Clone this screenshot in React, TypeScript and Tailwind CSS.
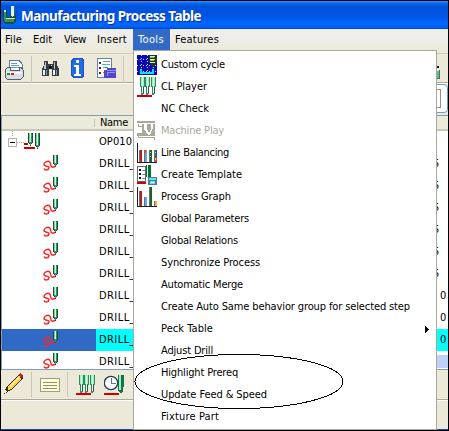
import React, { useLayoutEffect, useRef, useState } from "react";

/** Text set to a fixed advance width by spreading the difference over its letters. */
function Fit({ w, children, className = "" }: { w: number; children: string; className?: string }) {
  const ref = useRef<HTMLSpanElement>(null);
  const [spacing, setSpacing] = useState(0);
  useLayoutEffect(() => {
    const el = ref.current;
    if (!el) return;
    el.style.letterSpacing = "0px";
    const natural = el.getBoundingClientRect().width;
    const next = (w - natural) / children.length;
    el.style.letterSpacing = next + "px";
    setSpacing(next);
  }, [w, children]);
  return (
    <span ref={ref} className={"inline-block whitespace-pre " + className} style={{ letterSpacing: spacing }}>
      {children}
    </span>
  );
}

function Bit({ x, y, h = 12, w = 5 }: { x: number; y: number; h?: number; w?: number }) {
  const b = h - 4;
  return (
    <g transform={`translate(${x} ${y})`}>
      <path d={`M0 0h${w}v${b}l-${w / 2} 4l-${w / 2} -4z`} fill="#174d35" />
      <path d={`M1 0h1v${b}h-1z`} fill="#70d890" />
      <path d={`M2 0h1v${b}h-1z`} fill="#d4ffe0" />
      <path d={`M3 0h1v${b}h-1z`} fill="#28a050" />
      <path d={`M1 ${b}h3v1h-1v2h-1v-2h-1z`} fill="#68788c" />
    </g>
  );
}

function Svg({ w, h, children, className = "" }: { w: number; h: number; children: React.ReactNode; className?: string }) {
  return (
    <svg width={w} height={h} viewBox={`0 0 ${w} ${h}`} shapeRendering="crispEdges" className={"block shrink-0 " + className}>
      {children}
    </svg>
  );
}

function PlayerIcon() {
  return (
    <Svg w={20} h={20}>
      {[3, 8, 14].map((x) => (
        <g key={x}>
          <path d={`M${x} 0h5v9l-1 2v5l-1 2h-1l-1-2v-5l-1-2z`} fill="#2b8a60" />
          <path d={`M${x + 1} 0h3v9h-3z`} fill="#9af5b8" />
          <path d={`M${x + 2} 1h1v15h-1z`} fill="#e0ffe8" />
          <path d={`M${x + 3} 10h1v6h-1z`} fill="#315544" />
          <path d={`M${x + 1} 16h2v2h-2z`} fill="#68718b" />
        </g>
      ))}
      <path d="M0 18h15v2H0z" fill="#d00000" />
    </Svg>
  );
}

function CycleIcon() {
  return (
    <Svg w={20} h={20}>
      <path d="M0 0h20v20H0z" fill="#0808b8" />
      <path d="M4.500 0v20M10.500 0v20M16.500 0v20M0 4.500h20M0 10.500h20M0 16.500h20" stroke="#ccd8ff" strokeDasharray="1 2" />
      <path d="M12 0h8v7l-3 5h-2l-3-5z" fill="#183b28" />
      <path d="M13 1h5M13 4h5M13 7h5" stroke="#f0e880" />
      <path d="M13 2h4v1h-4zM13 5h4v1h-4z" fill="#70c078" />
      <path d="M4 14v4h12v-4" fill="none" stroke="#00e8f8" strokeWidth="1.500" />
    </Svg>
  );
}

function MachineIcon() {
  return (
    <Svg w={20} h={20}>
      <path d="M0 0h18v2H0zM1 3h1v2h4v4H5V6H1zM5 3h13v12H5zM0 12h6v3H0zM1 15h1v1h16v3h-1v-2H1z" fill="#aca899" />
      <path d="M7 3h3v4l2 4 2-4V3h2v4l-3 7h-2L7 8z" fill="#fff" />
      <path d="M10 3h4v5l-2 4-2-4z" fill="#aca899" />
    </Svg>
  );
}

function BarsIcon({ graph = false }: { graph?: boolean }) {
  const bars = graph
    ? [[2, 4, "#c01818"], [7, 10, "#6aa6df"], [12, 0, "#245d28"], [17, 14, "#f0b820"]]
    : [[2, 7, "#c01818"], [7, 7, "#6aa6df"], [12, 7, "#245d28"], [17, 7, "#345b7d"]];
  return (
    <Svg w={20} h={20}>
      <path d="M0 0h1v19h19v1H0z" fill="#202020" />
      {bars.map(([x, y, c]) => (
        <g key={x}>
          <path d={`M${x} ${y}h3v${19 - Number(y)}h-3z`} fill={c as string} />
          <path d={`M${x} ${y}h1v${19 - Number(y)}h-1z`} fill="#57758f" />
        </g>
      ))}
      {!graph && <path d="M7 7h2v3H7zM3 17h1v1H3zM18 15h2v4h-2z" fill="#e04828" />}
      {!graph && <path d="M13 9h1v1h-1zM13 13h1v1h-1zM18 9h1v1h-1zM18 15h1v2h-1z" fill="#ffd030" />}
    </Svg>
  );
}

function TemplateIcon() {
  return (
    <Svg w={20} h={20}>
      <path d="M.5 1.500h8v15h-8z" fill="#fff" stroke="#59677d" />
      <path d="M2 4h2v2H2zM2 8h2v2H2zM2 12h2v2H2z" fill="#111" />
      <path d="M5 5h3v1H5zM5 9h3v1H5zM5 13h3v1H5z" fill="#888" />
      <path d="M9 0h5v11l-2 4-3-3z" fill="#087034" />
      <path d="M10 0h1v13h-1z" fill="#d9ffe0" />
      <path d="M0 17h9v2H0z" fill="#d00000" />
      <path d="M11 12h9v8h-9z" fill="#4d7a98" />
      <path d="M12 13h7v2h-7zM13 16h5v3h-5z" fill="#64e2ee" />
      <path d="M14 17h3v1h-3z" fill="#fff" />
    </Svg>
  );
}

const menuItems: { label: string; w: number; icon?: React.ReactNode; off?: boolean; sub?: boolean }[] = [
  { label: "Custom cycle", w: 64, icon: <CycleIcon /> },
  { label: "CL Player", w: 46, icon: <PlayerIcon /> },
  { label: "NC Check", w: 48 },
  { label: "Machine Play", w: 63, icon: <MachineIcon />, off: true },
  { label: "Line Balancing", w: 68, icon: <BarsIcon /> },
  { label: "Create Template", w: 81, icon: <TemplateIcon /> },
  { label: "Process Graph", w: 70, icon: <BarsIcon graph /> },
  { label: "Global Parameters", w: 88 },
  { label: "Global Relations", w: 77 },
  { label: "Synchronize Process", w: 99 },
  { label: "Automatic Merge", w: 82 },
  { label: "Create Auto Same behavior group for selected step", w: 249 },
  { label: "Peck Table", w: 52, sub: true },
  { label: "Adjust Drill", w: 52 },
  { label: "Highlight Prereq", w: 77 },
  { label: "Update Feed & Speed", w: 106 },
  { label: "Fixture Part", w: 58 },
];

function ToolsMenu() {
  return (
    <div className="absolute left-[133px] top-[50px] h-[380px] w-[304px] border border-[#aca899] bg-white pt-[3px]">
      {menuItems.map((m) => (
        <div key={m.label} className="flex h-[22px] items-center pl-[3px]">
          <div className="w-6">{m.icon}</div>
          <Fit w={m.w} className={m.off ? "text-[#aca899]" : "text-black"}>{m.label}</Fit>
          {m.sub && (
            <Svg w={4} h={7} className="mr-[7px] ml-auto">
              <path d="M0 0h1v1h1v1h1v1h1v1H3v1H2v1H1v1H0z" />
            </Svg>
          )}
        </div>
      ))}
    </div>
  );
}

function Sep() {
  return <div className="h-[25px] w-px bg-[#c9c6b5]" />;
}

function TopTools() {
  return (
    <div className="flex h-[30px] shrink-0 border-t border-b border-t-[#d0cdba] border-b-[#aca899] bg-[#ece9d8]">
      <Svg w={132} h={28}>
        <path d="M9 6h9l3 4v7H8z" fill="#fff" stroke="#637899" />
        <path d="M10 9h6M10 11h8M10 13h8" stroke="#6895cc" />
        <path d="M4 16l3-3h2v3h9v-3h2l2 3v7l-2 2H6l-2-2z" fill="#d7dce5" stroke="#4c5a72" />
        <path d="M5 18h16v2H5z" fill="#f8f8fb" />
        <path d="M6 19h3v2H6z" fill="#00a028" />
        <path d="M10 19h3v2h-3z" fill="#d02010" />
        <path d="M30.500 2v25M122.500 2v25" stroke="#c9c6b5" />
        <g transform="translate(40 6)">
          <path d="M3 1h4v3h3v2h-2v10H1V9l2-4zM12 1h4v4l2 4v7h-7V5h-2V4h3z" fill="#343b43" />
          <path d="M4 2h1v7H3zM13 2h1v7h-1z" fill="#b9c6cc" />
          <path d="M2 10h2v5H2zM12 10h2v5h-2z" fill="#edf3f6" />
          <path d="M5 10h1v5H5zM15 10h1v5h-1z" fill="#84949e" />
          <path d="M8 6h3v3H8z" fill="#111" />
        </g>
        <path d="M72 4h9l2 2v16l-2 2h-9l-2-2V6z" fill="#1853c7" />
        <path d="M73 5h7l2 2v14l-2 2h-7l-2-2V7z" fill="#236be2" />
        <path d="M75 6h3v3h-3zM73 11h5v9h2v2h-7v-2h2v-7h-2z" fill="#fff" />
        <path d="M96.500 4.500h14v19h-14z" fill="#fff" stroke="#6780aa" />
        <path d="M98 8h2v2h-2zM98 13h2v2h-2zM98 18h2v2h-2z" fill="#333" />
        <path d="M102 7h7M102 13h5M102 18h2" stroke="#888" />
        <path d="M101 10h8v1h-8z" fill="#25c9e6" />
        <path d="M103 16h3v-2h9v10h-12z" fill="#5148c9" />
        <path d="M106 16h9M106 22v-4h8" stroke="#9890f3" fill="none" />
      </Svg>
      <Svg w={11} h={28} className="ml-auto">
        <path d="M0 12h2v2H0z" fill="#111" />
        <path d="M0 17h3v7H0z" fill="#49ca83" />
        <path d="M2.500 16v8H0" fill="none" stroke="#536a71" />
      </Svg>
    </div>
  );
}

function Squiggle() {
  return (
    <Svg w={16} h={18}>
      <path
        d="M1 13.500C2 16 6 15 6 12.500C6 10.500 1 12 1 9.500C1 7 4.500 6 6 6.500C8.500 7.500 7 11.500 9 12C10.500 12.500 12 11.500 13 10.500"
        shapeRendering="auto"
        fill="none"
        stroke="#ff2525"
        strokeWidth="1.500"
      />
      <Bit x={10} y={0} h={12} />
    </Svg>
  );
}

const rows = ["5", "5", "5", "5", "5", "5", "0", "0", "0", ""];

function ProcessTable() {
  return (
    <div className="flex h-[255px] shrink-0 flex-col overflow-hidden border-t border-b border-l border-[#7f9db9] bg-white">
      <div className="flex h-[15px] shrink-0 items-center border-b-2 border-[#cbc7b8] bg-[#ebeadb]">
        <div className="ml-[92px] h-2 w-px bg-[#c5c2b1]" />
        <Fit w={28} className="ml-[5px]">Name</Fit>
      </div>
      <div className="flex h-[22px] shrink-0 items-center">
        <Svg w={40} h={22}>
          <path d="M10.500 0v6M15 11.500h8" stroke="#aca899" strokeDasharray="1 1" />
          <path d="M6.500 7.500h8v8h-8z" fill="#fff" stroke="#b3b2a6" />
          <path d="M8 11h5v1H8z" />
          <Bit x={26} y={2} h={13} />
          <Bit x={33} y={2} h={16} />
          <path d="M22 12h4v2h-4zM22 16h11v2H22z" fill="#c80000" />
        </Svg>
        <Fit w={33} className="ml-[57px]">OP010</Fit>
      </div>
      {rows.map((v, i) => (
        <div key={i} className={"flex h-[22px] shrink-0 " + (i === 8 ? "bg-[#00ffff]" : "bg-white")}>
          <div className={"flex w-[94px] shrink-0 items-center pl-[41px] " + (i === 8 ? "bg-[#316ac5]" : "")}>
            <Squiggle />
          </div>
          <Fit w={36} className="ml-[3px] leading-[22px]">DRILL_</Fit>
          <div className="ml-auto w-[13px] overflow-hidden">
            {v ? <span className={"block leading-[22px] " + (v === "5" ? "-ml-[2px]" : "ml-[5px]")}>{v}</span> : (
              <div className="mt-[3px] h-[15px] border-t border-b border-white bg-[#bfd0fb]" />
            )}
          </div>
        </div>
      ))}
    </div>
  );
}

function BottomTools() {
  return (
    <div className="h-[30px] shrink-0 border-b border-[#aca899] bg-[#ece9d8]">
      <div className="flex items-center pt-0.5">
        <Svg w={30} h={25}>
          <path d="M3 20l3-6L18 2l4 4L10 18l-7 4z" fill="#332d20" />
          <path d="M7 14L17 4l3 3-10 10-3 1z" fill="#ffd34b" />
          <path d="M8 14L18 4l1 1L9 15z" fill="#fff09a" />
          <path d="M17 3l2-2 3 3-2 2z" fill="#cc2015" />
          <path d="M4 18l2 2-3 1z" fill="#fff0c0" />
        </Svg>
        <Sep />
        <Svg w={35} h={25}>
          <path d="M8.500 6.500h19v13h-19z" fill="#ffffd0" stroke="#9c9c90" />
          <path d="M11 10.500h14M11 13.500h14M11 16.500h14" stroke="#8d8d8d" />
        </Svg>
        <Sep />
        <div className="w-2" />
        <PlayerIcon />
        <Svg w={20} h={20} className="ml-2">
          <path d="M14 0h6v8l-1 8-2 3-3-4z" fill="#16704a" />
          <path d="M15 0h2v15h-2z" fill="#9af5b8" />
          <circle cx="7" cy="8" r="6.700" fill="#fff" stroke="#263955" strokeWidth="1.300" shapeRendering="auto" />
          <path d="M7.500 3v5h4" fill="none" stroke="#5b7490" />
          <path d="M0 18h15v2H0z" fill="#d00000" />
        </Svg>
      </div>
    </div>
  );
}

export default function App() {
  return (
    <div className="relative flex h-[431px] w-[449px] flex-col overflow-hidden border border-black bg-[#ece9d8] font-['DejaVu_Sans_Condensed','DejaVu_Sans',sans-serif] text-[11px] leading-[14px] text-black">
      <div className="-mt-px flex h-[29px] shrink-0 items-center border-t border-black bg-[linear-gradient(to_bottom,#3790fa_0px,#086bf0_2px,#0052dc_5px,#0054e3_15px,#0066ff_22px,#0062f4_26px,#003dd7_28px)]">
        <Svg w={15} h={20} className="ml-0.5">
          <path d="M0 5h4v7h3V9h6v7l-2 3H2l-2-3z" fill="#164c38" />
          <path d="M1 6h2v8h8v3H2l-1-2z" fill="#379065" />
          <path d="M1 5h2v2H1zM3 13h9v1H3z" fill="#d1efb1" />
          <path d="M8 1h3v9l-2 2-1-2z" fill="#dff3ed" />
          <path d="M11 1h1v10h-1z" fill="#346473" />
        </Svg>
        <Fit w={180} className="ml-[3px] pt-0.5 font-['Noto_Sans','Open_Sans',sans-serif] text-[13.5px] font-bold text-white [text-shadow:1px_1px_#0832a0]">Manufacturing Process Table</Fit>
      </div>
      <div className="flex h-6 shrink-0 bg-[linear-gradient(to_bottom,#f0eff0,#ece9d8)]">
        <div className="flex h-[22px] w-full items-center">
          <div className="w-7 pl-1"><Fit w={17}>File</Fit></div>
          <div className="w-[30px] pl-1"><Fit w={19}>Edit</Fit></div>
          <div className="w-[34px] pl-[5px]"><Fit w={22}>View</Fit></div>
          <div className="w-10 pl-1"><Fit w={30}>Insert</Fit></div>
          <div className="flex h-[22px] w-[37px] items-center bg-[#316ac5] pl-[5px] text-white"><Fit w={26}>Tools</Fit></div>
          <div className="pl-[5px]"><Fit w={44}>Features</Fit></div>
        </div>
      </div>
      <TopTools />
      <div className="flex h-[32px] shrink-0 justify-end border-t border-white pb-0.5">
        <div className="flex w-[22px] justify-end rounded-r border border-[#6f9bc5] bg-white pt-1 pr-1.5">
          <div className="h-[19px] w-3 border border-[#958f80]" />
        </div>
      </div>
      <ProcessTable />
      <BottomTools />
      <div className="min-h-0 grow border-t border-b border-t-white border-b-[#1248c8]" />
      <div className="absolute -top-px -left-px">
        <ToolsMenu />
        <svg width="449" height="431" className="absolute top-0 left-0 max-w-none" shapeRendering="crispEdges">
          <ellipse cx="239" cy="381.500" rx="104" ry="27" fill="none" stroke="#000" />
        </svg>
      </div>
    </div>
  );
}
